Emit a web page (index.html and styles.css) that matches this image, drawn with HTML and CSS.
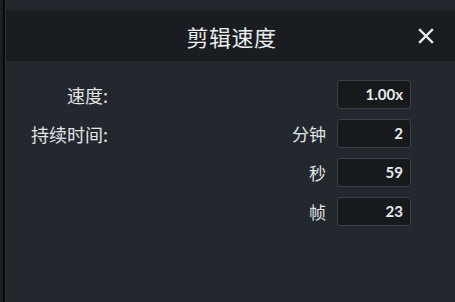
FILE: index.html
```html
<!DOCTYPE html>
<html>

<head>
	<title>剪辑速度</title>
	<link rel="stylesheet" href="styles.css">
</head>

<body>
	<div class="frame">
		<div class="edge"></div>
		<div class="panel">
			<div class="header">
				<span></span>
				<h1 class="title">剪辑速度</h1>
				<button class="close" aria-label="关闭">
					<svg width="16" height="16" viewBox="0 0 16 16">
						<path d="M2 2 L14 14 M14 2 L2 14" stroke="#e8eaec" stroke-width="2.4" stroke-linecap="square" fill="none" />
					</svg>
				</button>
			</div>
			<div class="form">
				<div class="row">
					<label class="main-label">速度:</label>
					<span class="unit"></span>
					<div class="field">1.00x</div>
				</div>
				<div class="row">
					<label class="main-label">持续时间:</label>
					<span class="unit">分钟</span>
					<div class="field">2</div>
				</div>
				<div class="row">
					<label class="main-label"></label>
					<span class="unit">秒</span>
					<div class="field">59</div>
				</div>
				<div class="row">
					<label class="main-label"></label>
					<span class="unit">帧</span>
					<div class="field">23</div>
				</div>
			</div>
		</div>
	</div>
</body>

</html>
```

FILE: styles.css
```css
html,
body {
	margin: 0;
	padding: 0;
	height: 100%;
	background-color: #23272e;
	font-family: "Noto Sans CJK SC", "Noto Sans", sans-serif;
	color: #e4e6e8;
}

.frame {
	display: flex;
	height: 100%;
}

.edge {
	width: 3px;
	background-color: #1b1e22;
	border-right: 2px solid #08090a;
}

.panel {
	flex: 1;
	border-left: 1px solid #2f333a;
	padding-top: 10px;
	background-color: #23272e;
}

.header {
	height: 51px;
	background-color: #191c20;
	display: grid;
	grid-template-columns: 1fr auto 1fr;
	align-items: center;
}

.title {
	margin: 0;
	font-size: 22px;
	font-weight: normal;
	color: #eceef0;
	letter-spacing: 0.5px;
	padding-left: 2px;
}

.close {
	justify-self: end;
	margin-right: 21px;
	padding: 0;
	border: none;
	background: none;
	width: 16px;
	height: 16px;
	display: flex;
}

.form {
	padding-top: 19px;
	display: flex;
	flex-direction: column;
	gap: 10px;
}

.row {
	display: flex;
	align-items: center;
	height: 29px;
	padding-right: 44px;
}

.main-label {
	width: 102px;
	text-align: right;
	font-size: 18px;
	color: #e2e4e6;
}

.unit {
	flex: 1;
	text-align: right;
	font-size: 17px;
	margin-right: 11px;
	color: #e2e4e6;
}

.field {
	box-sizing: border-box;
	width: 74px;
	height: 29px;
	border: 1px solid #3b4048;
	border-radius: 3px;
	background-color: #171a1d;
	text-align: right;
	padding-right: 7px;
	font-family: Lato, "Open Sans", sans-serif;
	font-size: 15px;
	font-weight: bold;
	line-height: 27px;
	color: #e8eaec;
}
```
